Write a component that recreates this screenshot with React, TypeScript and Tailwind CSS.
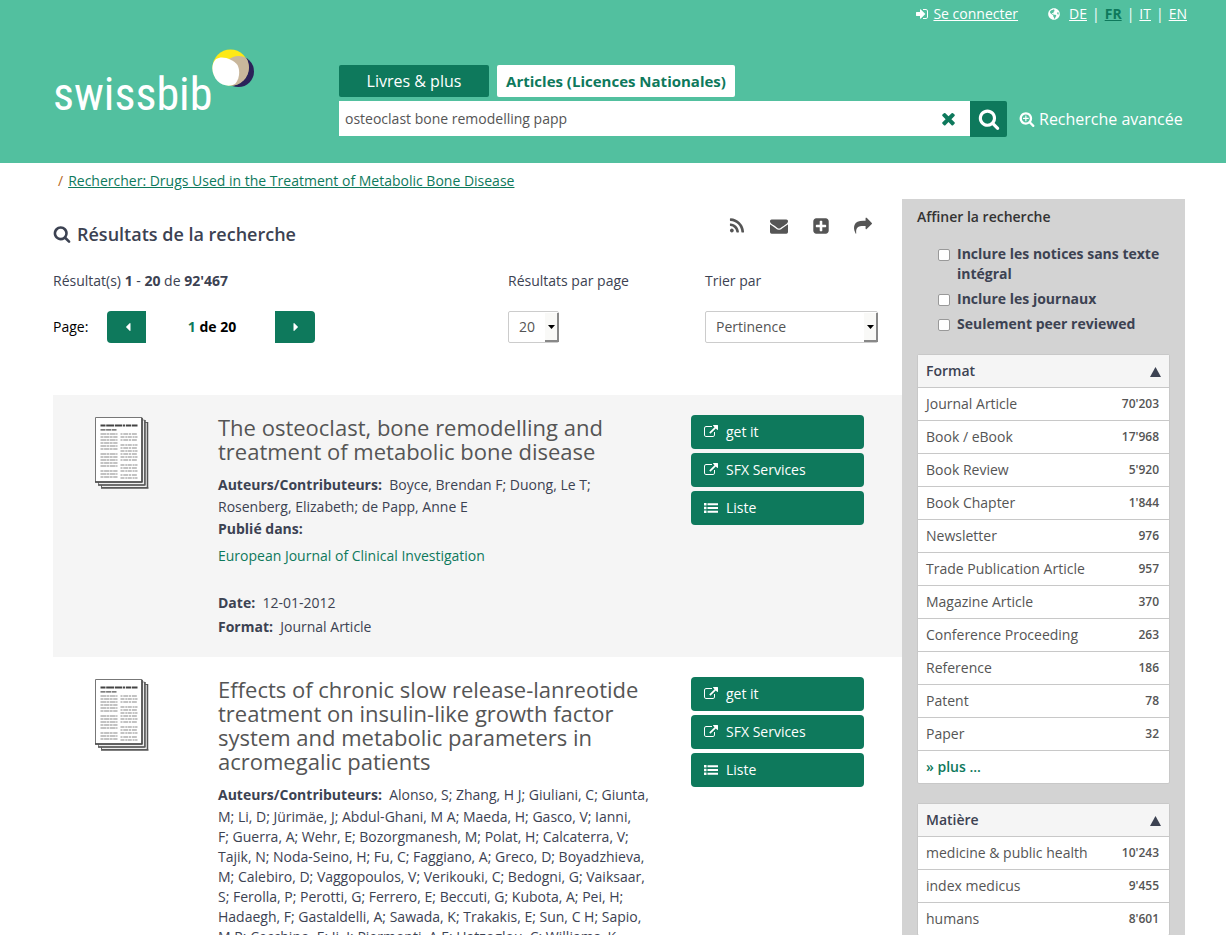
import React from "react";
import { FaGlobeAmericas } from "react-icons/fa";

const icons = {
  signIn:
    "M1312 896q0 26-19 45l-544 544q-19 19-45 19t-45-19-19-45v-288h-448q-26 0-45-19t-19-45v-384q0-26 19-45t45-19h448v-288q0-26 19-45t45-19 45 19l544 544q19 19 19 45zm352-352v704q0 119-84.5 203.5t-203.5 84.5h-320q-13 0-22.5-9.5t-9.5-22.5q0-4-1-20t-.5-26.5 3-23.5 10-19.5 20.5-6.5h320q66 0 113-47t47-113v-704q0-66-47-113t-113-47h-312l-11.5-1-11.5-3-8-5.5-7-9-2-13.5q0-4-1-20t-.5-26.5 3-23.5 10-19.5 20.5-6.5h320q119 0 203.5 84.5t84.5 203.5z",
  search:
    "M1216 832q0-185-131.5-316.5t-316.5-131.5-316.5 131.5-131.5 316.5 131.5 316.5 316.5 131.5 316.5-131.5 131.5-316.5zm512 832q0 52-38 90t-90 38q-54 0-90-38l-343-342q-179 124-399 124-143 0-273.5-55.5t-225-150-150-225-55.5-273.5 55.5-273.5 150-225 225-150 273.5-55.5 273.5 55.5 225 150 150 225 55.5 273.5q0 220-124 399l343 343q37 37 37 90z",
  searchPlus:
    "M1088 800v64q0 13-9.5 22.5t-22.5 9.5h-224v224q0 13-9.5 22.5t-22.5 9.5h-64q-13 0-22.5-9.5t-9.5-22.5v-224h-224q-13 0-22.5-9.5t-9.5-22.5v-64q0-13 9.5-22.5t22.5-9.5h224v-224q0-13 9.5-22.5t22.5-9.5h64q13 0 22.5 9.5t9.5 22.5v224h224q13 0 22.5 9.5t9.5 22.5zm128 32q0-185-131.5-316.5t-316.5-131.5-316.5 131.5-131.5 316.5 131.5 316.5 316.5 131.5 316.5-131.5 131.5-316.5zm512 832q0 53-37.5 90.5t-90.5 37.5q-54 0-90-38l-343-342q-179 124-399 124-143 0-273.5-55.5t-225-150-150-225-55.5-273.5 55.5-273.5 150-225 225-150 273.5-55.5 273.5 55.5 225 150 150 225 55.5 273.5q0 220-124 399l343 343q37 37 37 90z",
  times:
    "M1490 1322q0 40-28 68l-136 136q-28 28-68 28t-68-28l-294-294-294 294q-28 28-68 28t-68-28l-136-136q-28-28-28-68t28-68l294-294-294-294q-28-28-28-68t28-68l136-136q28-28 68-28t68 28l294 294 294-294q28-28 68-28t68 28l136 136q28 28 28 68t-28 68l-294 294 294 294q28 28 28 68z",
  rss: "M576 1344q0 80-56 136t-136 56-136-56-56-136 56-136 136-56 136 56 56 136zm512 123q2 28-17 48-18 21-47 21h-135q-25 0-43-16.5t-20-41.5q-22-229-184.5-391.5t-391.5-184.5q-25-2-41.5-20t-16.5-43v-135q0-29 21-47 17-17 43-17h5q160 13 306 80.5t259 181.5q114 113 181.5 259t80.5 306zm512 2q2 27-18 47-18 20-46 20h-143q-26 0-44.5-17.5t-19.5-42.5q-12-215-101-408.5t-231.5-336-336-231.5-408.5-102q-25-1-42.5-19.5t-17.5-43.5v-143q0-28 20-46 18-18 44-18h3q262 13 501.5 120t425.5 294q187 186 294 425.5t120 501.5z",
  envelope:
    "M1792 710v794q0 66-47 113t-113 47h-1472q-66 0-113-47t-47-113v-794q44 49 101 87 362 246 497 345 57 42 92.5 65.5t94.5 48 110 24.5h2q51 0 110-24.5t94.5-48 92.5-65.5q170-123 498-345 57-39 100-87zm0-294q0 79-49 151t-122 123q-376 261-468 325-10 7-42.5 31t-54 38.5-52 32.5-57.5 27-50 9h-2q-23 0-50-9t-57.5-27-52-32.5-54-38.5-42.5-31q-91-64-262-182.5t-205-142.5q-62-42-117-115.5t-55-136.5q0-78 41.5-130t118.5-52h1472q65 0 112.5 47t47.5 113z",
  plusSquare:
    "M1408 960v-128q0-26-19-45t-45-19h-320v-320q0-26-19-45t-45-19h-128q-26 0-45 19t-19 45v320h-320q-26 0-45 19t-19 45v128q0 26 19 45t45 19h320v320q0 26 19 45t45 19h128q26 0 45-19t19-45v-320h320q26 0 45-19t19-45zm256-544v960q0 119-84.5 203.5t-203.5 84.5h-960q-119 0-203.5-84.5t-84.5-203.5v-960q0-119 84.5-203.5t203.5-84.5h960q119 0 203.5 84.5t84.5 203.5z",
  share:
    "M1792 640q0 26-19 45l-512 512q-19 19-45 19t-45-19-19-45v-256h-224q-98 0-175.5 6t-154 21.5-133 42.5-105.5 69.5-80 101-48.5 138.5-17.5 181q0 55 5 123 0 6 2.5 23.5t2.5 26.5q0 15-8.5 25t-23.5 10q-16 0-28-17-7-9-13-22t-13.5-30-10.5-24q-127-285-127-451 0-199 53-333 162-403 875-403h224v-256q0-26 19-45t45-19 45 19l512 512q19 19 19 45z",
  external:
    "M1408 928v320q0 119-84.5 203.5t-203.5 84.5h-832q-119 0-203.5-84.5t-84.5-203.5v-832q0-119 84.5-203.5t203.5-84.5h704q14 0 23 9t9 23v64q0 14-9 23t-23 9h-704q-66 0-113 47t-47 113v832q0 66 47 113t113 47h832q66 0 113-47t47-113v-320q0-14 9-23t23-9h64q14 0 23 9t9 23zm384-864v512q0 26-19 45t-45 19-45-19l-176-176-652 652q-10 10-23 10t-23-10l-114-114q-10-10-10-23t10-23l652-652-176-176q-19-19-19-45t19-45 45-19h512q26 0 45 19t19 45z",
  list: "M0 256h320v320h-320zM448 288h1344v256h-1344zM0 736h320v320h-320zM448 768h1344v256h-1344zM0 1216h320v320h-320zM448 1248h1344v256h-1344z",
  caretLeft:
    "M1216 448v896q0 26-19 45t-45 19-45-19l-448-448q-19-19-19-45t19-45l448-448q19-19 45-19t45 19 19 45z",
  caretRight:
    "M1152 896q0 26-19 45l-448 448q-19 19-45 19t-45-19-19-45v-896q0-26 19-45t45-19 45 19l448 448q19 19 19 45z",
};

function Icon({ name, className }: { name: keyof typeof icons; className: string }) {
  return (
    <svg viewBox="0 0 1792 1792" fill="currentColor" aria-hidden="true" className={className}>
      <path d={icons[name]} />
    </svg>
  );
}

function Logo() {
  return (
    <a href="#" aria-label="swissbib" className="flex w-[202px] items-start text-white">
      <span className="mt-[15px] w-[159px] font-['Roboto_Condensed','Open_Sans',sans-serif] text-[46px] leading-[60px]">
        swissbib
      </span>
      <svg viewBox="0 0 43 40" aria-hidden="true" className="h-[40px] w-[43px] shrink-0">
        <circle cx="26.5" cy="22.5" r="15.5" fill="#2b2259" />
        <circle cx="18.5" cy="18.5" r="18" fill="#fde916" />
        <clipPath id="beige">
          <circle cx="18.5" cy="18.5" r="18.5" />
        </clipPath>
        <circle cx="26.5" cy="22.5" r="15.5" fill="#c9b79c" clipPath="url(#beige)" />
        <path
          d="M4 10C10 6 21 10 25.500 16C28 21 28 29 23.500 34.500C18 38.500 10 36.500 5.500 32C0 26 -2 16 4 10Z"
          fill="#fff"
        />
      </svg>
    </a>
  );
}

function Header() {
  return (
    <header className="h-[163px] bg-[#52c09f] pr-[39px] pl-[53px] text-white">
      <nav aria-label="Compte et langue" className="flex h-7 items-center justify-end text-sm">
        <a href="#" className="mr-[30px] flex items-center gap-1">
          <Icon name="signIn" className="size-[14px]" />
          <span className="underline">Se connecter</span>
        </a>
        <FaGlobeAmericas className="mr-[9px] size-3" aria-hidden="true" />
        <a href="#" className="underline">DE</a>
        <span className="px-[5px]">|</span>
        <a href="#" className="font-bold text-[#0e795c] underline">FR</a>
        <span className="px-[5px]">|</span>
        <a href="#" className="underline">IT</a>
        <span className="px-[5px]">|</span>
        <a href="#" className="underline">EN</a>
      </nav>
      <div className="flex pt-[21px] pr-[2px]">
        <div className="w-[286px] shrink-0">
          <Logo />
        </div>
        <div className="flex-1 pt-4">
          <div className="flex gap-2">
            <button type="button" className="h-8 w-[150px] rounded-xs bg-[#0e795c] text-base">
              Livres &amp; plus
            </button>
            <button
              type="button"
              className="h-8 w-[238px] rounded-xs bg-white text-[15px] font-bold text-[#0e795c]"
            >
              Articles (Licences Nationales)
            </button>
          </div>
          <form className="mt-1 flex" onSubmit={(e) => e.preventDefault()}>
            <div className="flex h-[35px] flex-1 items-center bg-white pr-3">
              <input
                type="text"
                aria-label="Recherche"
                defaultValue="osteoclast bone remodelling papp"
                className="h-full min-w-0 flex-1 bg-transparent pl-[6px] text-sm text-[#555] outline-none"
              />
              <button type="button" aria-label="Effacer" className="text-[#0e795c]">
                <Icon name="times" className="size-[19px]" />
              </button>
            </div>
            <button
              type="submit"
              aria-label="Rechercher"
              className="flex h-9 w-[37px] items-center justify-center rounded-r-xs bg-[#0e795c]"
            >
              <Icon name="search" className="size-[22px]" />
            </button>
            <a href="#" className="ml-3 flex w-[166px] items-center gap-1 text-base whitespace-nowrap">
              <Icon name="searchPlus" className="size-4" />
              Recherche avancée
            </a>
          </form>
        </div>
      </div>
    </header>
  );
}

function LegacySelect({
  id,
  value,
  options,
  className,
}: {
  id: string;
  value: string;
  options: string[];
  className: string;
}) {
  return (
    <div className={`relative h-8 ${className}`}>
      <select
        id={id}
        defaultValue={value}
        className="size-full appearance-none rounded-xs border border-[#ccc] bg-white pl-[10px] text-sm text-[#555]"
      >
        {options.map((o) => (
          <option key={o}>{o}</option>
        ))}
      </select>
      <span className="pointer-events-none absolute top-[2px] right-0 bottom-px flex w-[14px] items-center justify-center border-r-2 border-b-2 border-[#888] bg-[#f9f9f7]">
        <svg viewBox="0 0 7 4" className="h-1 w-[7px]" aria-hidden="true">
          <path d="M0 0h7L3.500 4z" fill="#000" />
        </svg>
      </span>
    </div>
  );
}

const toolLinks: { name: keyof typeof icons; label: string }[] = [
  { name: "rss", label: "RSS" },
  { name: "envelope", label: "E-mail" },
  { name: "plusSquare", label: "Sauvegarder" },
  { name: "share", label: "Partager" },
];

function ResultControls() {
  return (
    <div className="h-[196px]">
      <div className="flex h-[50px] items-start justify-between pr-[30px]">
        <h1 className="flex items-center gap-[6px] pt-[21px] text-lg leading-7 font-semibold text-[#3c4252]">
          <Icon name="search" className="size-[18px]" />
          Résultats de la recherche
        </h1>
        <div className="flex gap-6 pt-[18px] text-[#555]">
          {toolLinks.map((t) => (
            <a key={t.name} href="#" aria-label={t.label}>
              <Icon name={t.name} className="size-[18px]" />
            </a>
          ))}
        </div>
      </div>
      <div className="flex pt-[22px] text-sm text-[#3c4252]">
        <div className="flex-1">
          <p className="leading-5">
            Résultat(s) <b>1</b> - <b>20</b> de <b>92&apos;467</b>
          </p>
          <div className="mt-5 flex h-8 items-center text-black">
            <span className="w-[54px]">Page:</span>
            <button
              type="button"
              aria-label="Page précédente"
              className="flex h-8 w-[39px] items-center justify-center rounded-l bg-[#0e795c] pl-[2px] text-white"
            >
              <Icon name="caretLeft" className="size-[14px]" />
            </button>
            <span className="w-[129px] pl-[3px] text-center font-bold">
              <span className="text-[#0e795c]">1</span> de 20
            </span>
            <button
              type="button"
              aria-label="Page suivante"
              className="flex h-8 w-10 items-center justify-center rounded-r bg-[#0e795c] pl-[2px] text-white"
            >
              <Icon name="caretRight" className="size-[14px]" />
            </button>
          </div>
        </div>
        <div className="w-[197px]">
          <label htmlFor="limit" className="block leading-5">Résultats par page</label>
          <LegacySelect id="limit" value="20" options={["10", "20", "40"]} className="mt-5 w-[51px]" />
        </div>
        <div className="w-[197px]">
          <label htmlFor="sort" className="block leading-5">Trier par</label>
          <LegacySelect
            id="sort"
            value="Pertinence"
            options={["Pertinence", "Date"]}
            className="mt-5 w-[173px]"
          />
        </div>
      </div>
    </div>
  );
}

const leftLines = [25, 28, 31, 34, 37, 40, 45, 48, 51, 54, 57, 62, 65, 68];
const rightLines = [25, 28, 31, 36, 39, 42, 45, 48, 51, 56, 59, 62, 66, 69];

function ArticleThumb() {
  return (
    <svg viewBox="0 0 54 72" className="h-[72px] w-[54px]" aria-hidden="true">
      <path d="M6.500 5.500h46v65h-46z" fill="#eee" stroke="#666" />
      <path d="M52.500 5v66.500M6 71h47.500" stroke="#555" strokeWidth="1.500" />
      <path d="M3.500 3h46v65h-46z" fill="#eee" stroke="#888" />
      <path d="M50 3v65.500M3 68h47" stroke="#555" strokeWidth="1.500" />
      <path d="M.5.500h46.500v64.500h-46.500z" fill="#fff" stroke="#777" />
      <path d="M47 1v64.500M0 65h47.500" stroke="#444" strokeWidth="1.500" />
      <path d="M5.500 8.500h37" stroke="#444" strokeWidth="1.800" strokeDasharray="5 .7 8 .8 7 .7 2.500 .8" />
      <path d="M5.500 12.800h16" stroke="#555" strokeWidth="1.300" strokeDasharray="5 .6" />
      <g stroke="#888" strokeWidth="1.200" transform="translate(0 -8)">
        {leftLines.map((y, i) => (
          <path key={y} d={`M5.500 ${y}h17`} strokeDasharray={i % 2 ? "3 .6 5 .5" : "6 .5 2 .6"} />
        ))}
        {rightLines.map((y, i) => (
          <path key={y} d={`M25.500 ${y}h17`} strokeDasharray={i % 2 ? "4 .8 2 .5" : "2 .8 5 .7"} />
        ))}
      </g>
    </svg>
  );
}

const actions: { name: keyof typeof icons; label: string }[] = [
  { name: "external", label: "get it" },
  { name: "external", label: "SFX Services" },
  { name: "list", label: "Liste" },
];

interface Article {
  title: string;
  authors: string;
  journal: string;
  date: string;
}

function ResultItem({ article, shaded }: { article: Article; shaded: boolean }) {
  return (
    <article className={`flex pt-5 pb-[18px] ${shaded ? "bg-[#f5f5f5]" : "bg-white"}`}>
      <div className="w-[165px] shrink-0 pt-[2px] pl-[42px]">
        <ArticleThumb />
      </div>
      <div className="min-w-0 flex-1 pr-[35px] text-sm leading-5 text-[#3c4252]">
        <h2 className="text-[22px] leading-6 text-[#555]">{article.title}</h2>
        <p className="mt-[10px] whitespace-pre-line">
          <b className="leading-6">Auteurs/Contributeurs:</b>&nbsp; {article.authors}
        </p>
        <p className="leading-6 font-bold">Publié dans:</p>
        <p className="mt-[5px]">
          <a href="#" className="text-[#0e795c]">{article.journal}</a>
        </p>
        <p className="mt-[25px] leading-6">
          <b>Date:</b>&nbsp; {article.date}
        </p>
        <p className="leading-6">
          <b>Format:</b>&nbsp; Journal Article
        </p>
      </div>
      <div className="mr-[38px] flex w-[173px] shrink-0 flex-col gap-1">
        {actions.map((a) => (
          <a
            key={a.label}
            href="#"
            className="flex h-[34px] items-center gap-2 rounded bg-[#0e795c] pl-[13px] text-sm text-white"
          >
            <Icon name={a.name} className="size-[14px]" />
            {a.label}
          </a>
        ))}
      </div>
    </article>
  );
}

const articles: Article[] = [
  {
    title: "The osteoclast, bone remodelling and treatment of metabolic bone disease",
    authors: "Boyce, Brendan F; Duong, Le T;\nRosenberg, Elizabeth; de Papp, Anne E",
    journal: "European Journal of Clinical Investigation",
    date: "12-01-2012",
  },
  {
    title:
      "Effects of chronic slow release-lanreotide treatment on insulin-like growth factor system and metabolic parameters in acromegalic patients",
    authors: [
      "Alonso, S; Zhang, H J; Giuliani, C; Giunta,",
      "M; Li, D; Jürimäe, J; Abdul-Ghani, M A; Maeda, H; Gasco, V; Ianni,",
      "F; Guerra, A; Wehr, E; Bozorgmanesh, M; Polat, H; Calcaterra, V;",
      "Tajik, N; Noda-Seino, H; Fu, C; Faggiano, A; Greco, D; Boyadzhieva,",
      "M; Calebiro, D; Vaggopoulos, V; Verikouki, C; Bedogni, G; Vaiksaar,",
      "S; Ferolla, P; Perotti, G; Ferrero, E; Beccuti, G; Kubota, A; Pei, H;",
      "Hadaegh, F; Gastaldelli, A; Sawada, K; Trakakis, E; Sun, C H; Sapio,",
      "M R; Cecchino, E; Ji, J; Piermonti, A E; Hatzoglou, C; Williams, K",
    ].join("\n"),
    journal: "European Journal of Clinical Investigation",
    date: "01-04-2011",
  },
];

const facets = [
  {
    title: "Format",
    more: true,
    rows: [
      ["Journal Article", "70'203"],
      ["Book / eBook", "17'968"],
      ["Book Review", "5'920"],
      ["Book Chapter", "1'844"],
      ["Newsletter", "976"],
      ["Trade Publication Article", "957"],
      ["Magazine Article", "370"],
      ["Conference Proceeding", "263"],
      ["Reference", "186"],
      ["Patent", "78"],
      ["Paper", "32"],
    ],
  },
  {
    title: "Matière",
    more: false,
    rows: [
      ["medicine & public health", "10'243"],
      ["index medicus", "9'455"],
      ["humans", "8'601"],
    ],
  },
];

const filters = [
  "Inclure les notices sans texte intégral",
  "Inclure les journaux",
  "Seulement peer reviewed",
];

function Sidebar() {
  return (
    <aside className="w-[283px] shrink-0 bg-[#d3d3d3] px-[15px] pt-2 pb-5 text-sm">
      <h2 className="leading-5 font-semibold text-[#333]">Affiner la recherche</h2>
      <div className="mt-[17px] mb-5 flex flex-col gap-[5px] pl-[21px]">
        {filters.map((f) => (
          <label key={f} className="flex items-start gap-[7px] leading-5 font-bold text-[#3c4252]">
            <input
              type="checkbox"
              className="mt-[5px] size-3 shrink-0 appearance-none rounded-xs border border-[#999] bg-white"
            />
            {f}
          </label>
        ))}
      </div>
      {facets.map((facet) => (
        <section key={facet.title} className="mb-[19px] rounded-xs border border-[#c8c8c8] bg-white">
          <h3 className="flex h-8 items-center justify-between bg-[#f5f5f5] px-2 font-semibold text-[#3c4252]">
            {facet.title}
            <svg viewBox="0 0 11 10" className="mt-[2px] h-[10px] w-[11px]" fill="currentColor" aria-hidden="true">
              <path d="M5.500 0L11 10H0z" />
            </svg>
          </h3>
          <ul>
            {facet.rows.map(([label, count]) => (
              <li key={label} className="border-t border-[#c8c8c8]">
                <a href="#" className="flex h-8 items-center justify-between pr-[10px] pl-2 text-[#555]">
                  {label}
                  <span className="text-xs font-semibold">{count}</span>
                </a>
              </li>
            ))}
            {facet.more && (
              <li className="border-t border-[#c8c8c8]">
                <a href="#" className="flex h-8 items-center px-2 font-semibold text-[#0e795c]">
                  » plus ...
                </a>
              </li>
            )}
          </ul>
        </section>
      ))}
    </aside>
  );
}

export default function App() {
  return (
    <div className="min-h-screen bg-white font-['Open_Sans',sans-serif]">
      <Header />
      <nav aria-label="Fil d'Ariane" className="flex h-9 items-center gap-[5px] pl-[58px] text-sm">
        <span className="text-[#b5651d]">/</span>
        <a href="#" className="text-[#0e795c] underline">
          Rechercher: Drugs Used in the Treatment of Metabolic Bone Disease
        </a>
      </nav>
      <div className="flex pr-[41px] pl-[53px]">
        <main className="min-w-0 flex-1">
          <ResultControls />
          {articles.map((a, i) => (
            <ResultItem key={a.title} article={a} shaded={i % 2 === 0} />
          ))}
        </main>
        <Sidebar />
      </div>
    </div>
  );
}
